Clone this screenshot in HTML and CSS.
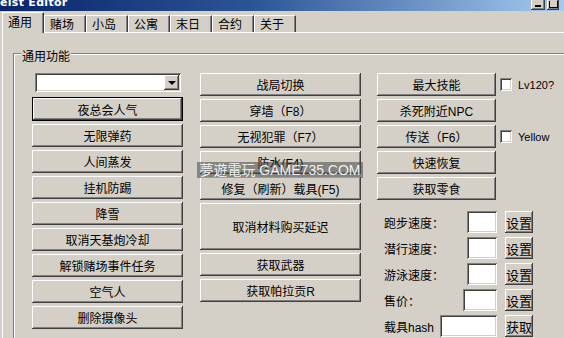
FILE: index.html
```html
<!DOCTYPE html>
<html lang="zh">
<head>
    <meta charset="UTF-8">
    <title>Heist Editor</title>
    <link rel="stylesheet" href="styles.css">
</head>
<body>

<div class="titlebar">
    <span class="title">eist Editor</span>
    <span class="title-buttons">
        <span class="tb-btn tb-min"><span class="tb-min-bar"></span></span>
        <span class="tb-btn tb-max"><span class="tb-max-box"></span></span>
    </span>
</div>

<div class="tabs">
    <div class="tab tab-active">通用</div>
    <div class="tab">赌场</div>
    <div class="tab">小岛</div>
    <div class="tab">公寓</div>
    <div class="tab">末日</div>
    <div class="tab">合约</div>
    <div class="tab">关于</div>
</div>

<div class="panel">
    <div class="group">
        <span class="group-title">通用功能</span>
        <div class="cols">
            <!-- linke Spalte -->
            <div class="col col-left">
                <div class="combo"><span class="combo-btn"><span class="combo-arrow"></span></span></div>
                <button class="btn btn-default">夜总会人气</button>
                <button class="btn">无限弹药</button>
                <button class="btn">人间蒸发</button>
                <button class="btn">挂机防踢</button>
                <button class="btn">降雪</button>
                <button class="btn">取消天基炮冷却</button>
                <button class="btn">解锁赌场事件任务</button>
                <button class="btn">空气人</button>
                <button class="btn">删除摄像头</button>
            </div>

            <!-- mittlere Spalte -->
            <div class="col col-mid">
                <button class="btn">战局切换</button>
                <button class="btn">穿墙（F8）</button>
                <button class="btn">无视犯罪（F7）</button>
                <button class="btn">防水(F4)</button>
                <button class="btn">修复（刷新）载具(F5)</button>
                <button class="btn btn-tall">取消材料购买延迟</button>
                <button class="btn">获取武器</button>
                <button class="btn">获取帕拉贡R</button>
            </div>

            <!-- rechte Spalte -->
            <div class="col col-right">
                <div class="right-row">
                    <button class="btn">最大技能</button>
                    <label class="check"><span class="check-box"></span>Lv120?</label>
                </div>
                <div class="right-row"><button class="btn">杀死附近NPC</button></div>
                <div class="right-row">
                    <button class="btn">传送（F6）</button>
                    <label class="check"><span class="check-box"></span>Yellow</label>
                </div>
                <div class="right-row"><button class="btn">快速恢复</button></div>
                <div class="right-row"><button class="btn">获取零食</button></div>

                <div class="fields">
                    <div class="field">
                        <span class="field-label">跑步速度：</span>
                        <input type="text" class="edit edit-short">
                        <button class="btn btn-small">设置</button>
                    </div>
                    <div class="field">
                        <span class="field-label">潜行速度：</span>
                        <input type="text" class="edit edit-short">
                        <button class="btn btn-small">设置</button>
                    </div>
                    <div class="field">
                        <span class="field-label">游泳速度：</span>
                        <input type="text" class="edit edit-short">
                        <button class="btn btn-small">设置</button>
                    </div>
                    <div class="field">
                        <span class="field-label">售价：</span>
                        <input type="text" class="edit edit-price">
                        <button class="btn btn-small">设置</button>
                    </div>
                    <div class="field">
                        <span class="field-label">载具hash</span>
                        <input type="text" class="edit edit-hash">
                        <button class="btn btn-small">获取</button>
                    </div>
                </div>
            </div>
        </div>
    </div>
</div>

<div class="watermark">夢遊電玩 GAME735.COM</div>

</body>
</html>
```

FILE: styles.css
```css
body {
    margin: 0;
    width: 564px;
    height: 338px;
    overflow: hidden;
    position: relative;
    background-color: #d4d0c8;
    font-family: "Liberation Sans", "Noto Sans CJK SC", sans-serif;
    font-size: 12px;
    color: #000;
}

/* Titelleiste (oben abgeschnitten) */
.titlebar {
    height: 11px;
    overflow: hidden;
    display: flex;
    justify-content: space-between;
    background: linear-gradient(to right, #0a246a 0%, #2c5596 45%, #a6caf0 100%);
}

.title {
    color: #fff;
    font-family: "DejaVu Sans", sans-serif;
    font-weight: bold;
    font-size: 11px;
    line-height: 11px;
    margin-top: -3px;
    letter-spacing: 0.3px;
}

.title-buttons {
    display: flex;
    gap: 2px;
    margin-right: 5px;
}

.tb-btn {
    width: 14px;
    height: 10px;
    background-color: #d4d0c8;
    box-shadow: inset -1px -1px #404040, inset 1px 0 #fff, inset -2px -2px #808080;
    display: flex;
    justify-content: center;
    align-items: flex-end;
}

.tb-max {
    width: 12px;
}

.tb-min-bar {
    width: 6px;
    height: 2px;
    background-color: #000;
    margin-bottom: 3px;
}

.tb-max-box {
    width: 7px;
    height: 6px;
    border: 1px solid #000;
    border-top: none;
    margin-bottom: 2px;
}

/* Registerkarten */
.tabs {
    display: flex;
    align-items: flex-end;
    height: 21px;
    padding-left: 2px;
}

.tab {
    box-sizing: border-box;
    width: 42px;
    height: 17px;
    padding-left: 5px;
    border-top: 1px solid #fff;
    border-left: 1px solid #fff;
    border-right: 1px solid #404040;
    box-shadow: inset -1px 0 #808080;
    line-height: 16px;
    font-family: "Noto Sans CJK SC", sans-serif;
    font-size: 12px;
}

.tab-active {
    position: relative;
    z-index: 1;
    width: 42px;
    height: 21px;
    margin-bottom: -1px;
    padding-top: 1px;
    background-color: #d4d0c8;
}

.panel {
    margin-left: 2px;
    border-top: 1px solid #fff;
    border-left: 1px solid #fff;
    padding: 20px 0 0 10px;
    height: 400px;
}

/* Gruppenrahmen */
.group {
    position: relative;
    width: 600px;
    height: 300px;
    padding: 19px 0 0 18px;
    border: 1px solid #808080;
    box-shadow: inset 1px 1px 0 #fff;
}

.group-title {
    position: absolute;
    top: -6px;
    left: 7px;
    padding: 0 1px;
    line-height: 16px;
    background-color: #d4d0c8;
    font-family: "Noto Sans CJK SC", sans-serif;
}

.cols {
    display: flex;
    align-items: flex-start;
}

.col {
    display: flex;
    flex-direction: column;
    gap: 3px;
}

.col-left {
    width: 151px;
    margin-right: 17px;
}

.col-mid {
    width: 161px;
    margin-right: 16px;
}

/* Schaltflächen */
.btn {
    box-sizing: border-box;
    height: 23px;
    padding: 0;
    border: none;
    background-color: #d4d0c8;
    font: inherit;
    color: #000;
    white-space: nowrap;
    box-shadow: inset -1px -1px #404040, inset 1px 1px #fff, inset -2px -2px #808080;
}

.btn-default {
    height: 24px;
    border: 1px solid #000;
}

.btn-tall {
    height: 47px;
}

.combo {
    box-sizing: border-box;
    width: 146px;
    height: 19px;
    margin-left: 3px;
    margin-bottom: 2px;
    padding: 2px;
    background-color: #fff;
    display: flex;
    justify-content: flex-end;
    box-shadow: inset 1px 1px #808080, inset -1px -1px #fff, inset 2px 2px #404040, inset -2px -2px #d4d0c8;
}

.combo-btn {
    width: 15px;
    height: 15px;
    background-color: #d4d0c8;
    box-shadow: inset -1px -1px #404040, inset 1px 1px #fff, inset -2px -2px #808080;
    display: flex;
    justify-content: center;
    align-items: center;
}

.combo-arrow {
    width: 0;
    height: 0;
    border-left: 4px solid transparent;
    border-right: 4px solid transparent;
    border-top: 4px solid #000;
}

/* rechte Spalte */
.right-row {
    display: flex;
    align-items: center;
}

.right-row .btn {
    width: 119px;
}

.check {
    display: flex;
    align-items: center;
    margin-left: 4px;
    font-size: 11px;
}

.check-box {
    width: 12px;
    height: 13px;
    margin-right: 6px;
    background-color: #fff;
    box-shadow: inset 1px 1px #808080, inset -1px -1px #fff, inset 2px 2px #404040, inset -2px -2px #d4d0c8;
}

.fields {
    display: flex;
    flex-direction: column;
    gap: 4px;
    width: 156px;
    margin-top: 8px;
}

.field {
    display: flex;
    align-items: center;
    height: 22px;
}

.field-label {
    padding-left: 7px;
    margin-right: auto;
}

.edit {
    box-sizing: border-box;
    height: 22px;
    padding: 0;
    border: none;
    background-color: #fff;
    box-shadow: inset 1px 1px #808080, inset -1px -1px #fff, inset 2px 2px #404040, inset -2px -2px #d4d0c8;
}

.edit-short {
    width: 30px;
}

.edit-price {
    width: 34px;
}

.edit-hash {
    width: 57px;
}

.btn-small {
    width: 28px;
    height: 22px;
    margin-left: 8px;
    font-size: 13px;
}

/* Wasserzeichen über dem Inhalt */
.watermark {
    position: absolute;
    top: 162px;
    left: 197px;
    width: 166px;
    height: 16px;
    background-color: rgba(70, 70, 70, 0.55);
    color: rgba(255, 255, 255, 0.9);
    font-family: "Liberation Sans", "Noto Sans CJK TC", sans-serif;
    font-size: 14px;
    line-height: 16px;
    text-align: center;
    white-space: nowrap;
}
```
